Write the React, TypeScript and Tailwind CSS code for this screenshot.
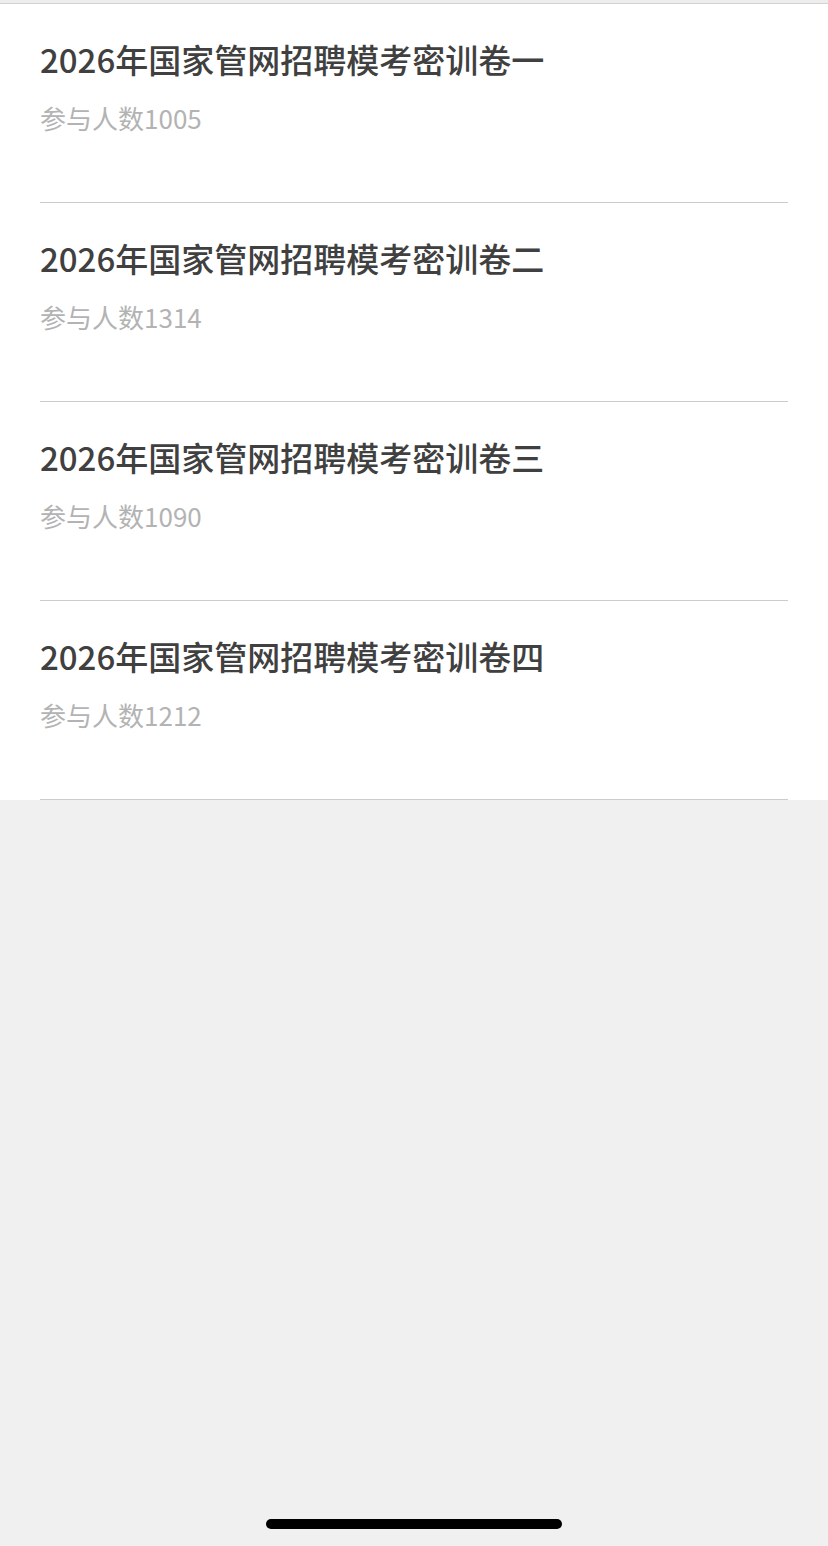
import React from 'react';

const PAPERS = [
  { title: '2026年国家管网招聘模考密训卷一', count: 1005 },
  { title: '2026年国家管网招聘模考密训卷二', count: 1314 },
  { title: '2026年国家管网招聘模考密训卷三', count: 1090 },
  { title: '2026年国家管网招聘模考密训卷四', count: 1212 },
];

export default function App() {
  return (
    <div
      className="relative h-[1546px] w-full overflow-hidden bg-[#f0f0f0]"
      style={{ fontFamily: '"Noto Sans CJK SC", "Noto Sans", sans-serif' }}
    >
      {/* thin strip from the nav bar above */}
      <div className="h-[4px] border-b border-[#d2d2d2] bg-[#ededed]" />

      <ul className="bg-white">
        {PAPERS.map(p => (
          <li key={p.title} className="mx-10 h-[199px] border-b border-[#cccccc] pt-[31px]">
            <p className="text-[33px] font-medium leading-[48px] text-[#404040]">{p.title}</p>
            <p className="mt-[17px] text-[26px] leading-[36px] text-[#b3b3b3]">参与人数{p.count}</p>
          </li>
        ))}
      </ul>

      {/* home indicator */}
      <div className="absolute bottom-[17px] left-1/2 h-[10px] w-[296px] -translate-x-1/2 rounded-full bg-black" />
    </div>
  );
}
